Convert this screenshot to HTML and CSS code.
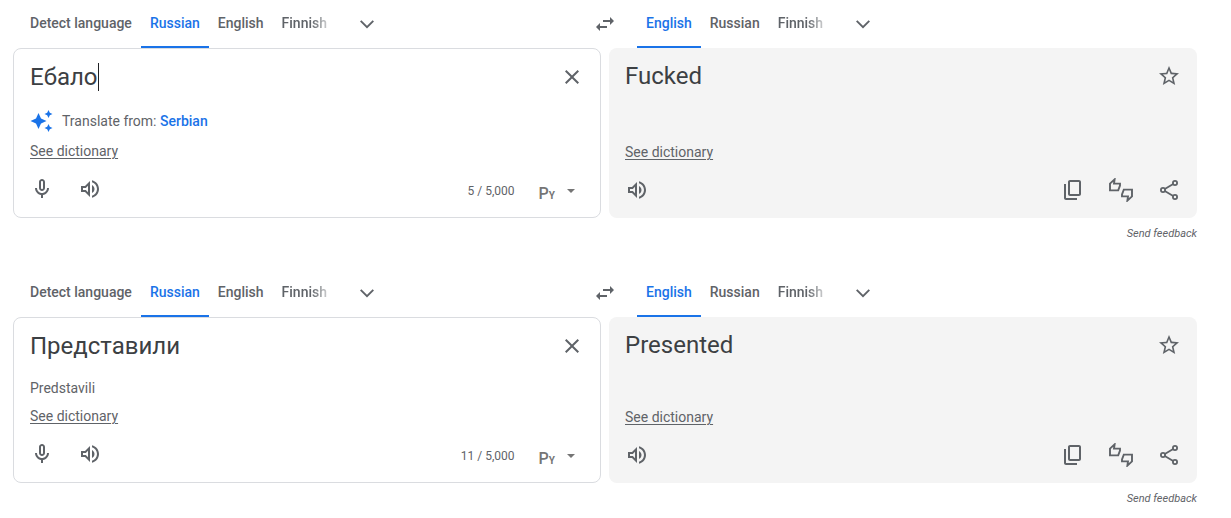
FILE: index.html
```html
<!DOCTYPE html>
<html lang="en">
<head>
<meta charset="utf-8">
<meta name="viewport" content="width=device-width, initial-scale=1">
<title>Translate</title>
<link rel="stylesheet" href="styles.css">
</head>
<body>
<svg class="sprite" aria-hidden="true">
  <symbol id="chevron" viewBox="0 0 24 24"><path d="M5.7 8.8 12 15.1l6.3-6.3" fill="none" stroke="currentColor" stroke-width="1.9"/></symbol>
  <symbol id="swap" viewBox="0 0 24 24"><path d="M6.99 11 3 15l3.99 4v-3H14v-2H6.99v-3zM21 9l-3.99-4v3H10v2h7.01v3L21 9z"/></symbol>
  <symbol id="close" viewBox="0 0 24 24"><path d="M19 6.41 17.59 5 12 10.59 6.41 5 5 6.41 10.59 12 5 17.59 6.41 19 12 13.41 17.59 19 19 17.59 13.41 12z"/></symbol>
  <symbol id="sparkle" viewBox="0 0 24 24"><path d="M8.5 4 11 9.5 16.5 12 11 14.5 8.5 20 6 14.5 .5 12 6 9.5zM18.5 1l1.3 2.7L22.5 5l-2.7 1.3L18.5 9l-1.3-2.7L14.5 5l2.7-1.3zM18.5 15l1.3 2.7 2.7 1.3-2.7 1.3-1.3 2.7-1.3-2.7-2.7-1.3 2.7-1.3z"/></symbol>
  <symbol id="mic" viewBox="0 0 24 24"><path d="M12 14c1.66 0 3-1.34 3-3V5c0-1.66-1.34-3-3-3S9 3.34 9 5v6c0 1.66 1.34 3 3 3zm-1-9c0-.55.45-1 1-1s1 .45 1 1v6c0 .55-.45 1-1 1s-1-.45-1-1V5zm6 6c0 2.76-2.24 5-5 5s-5-2.24-5-5H5c0 3.53 2.61 6.43 6 6.92V21h2v-3.08c3.39-.49 6-3.39 6-6.92h-2z"/></symbol>
  <symbol id="speaker" viewBox="0 0 24 24"><path d="M3 9v6h4l5 5V4L7 9H3zm7-.17v6.34L7.83 13H5v-2h2.83L10 8.83zM16.5 12c0-1.77-1.02-3.29-2.5-4.03v8.05c1.48-.73 2.5-2.25 2.5-4.02zM14 3.23v2.06c2.89.86 5 3.54 5 6.71s-2.11 5.85-5 6.71v2.06c4.01-.91 7-4.49 7-8.77s-2.99-7.86-7-8.77z"/></symbol>
  <symbol id="star" viewBox="0 0 24 24"><path d="M22 9.24l-7.19-.62L12 2 9.19 8.63 2 9.24l5.46 4.73L5.82 21 12 17.27 18.18 21l-1.63-7.03L22 9.24zM12 15.4l-3.76 2.27 1-4.28-3.32-2.88 4.38-.38L12 6.1l1.71 4.04 4.38.38-3.32 2.88 1 4.28L12 15.4z"/></symbol>
  <symbol id="copy" viewBox="0 0 24 24"><path d="M18 2H9c-1.1 0-2 .9-2 2v12c0 1.1.9 2 2 2h9c1.1 0 2-.9 2-2V4c0-1.1-.9-2-2-2zm0 14H9V4h9v12zM3 6v14c0 1.1.9 2 2 2h11v-2H5V6H3z"/></symbol>
  <symbol id="thumbs" viewBox="0 0 24 24"><g fill="none" stroke="currentColor" stroke-width="1.9"><path d="M1 5.6 5.6 1.4 5 5.6H11v2L9.2 12.4H1z"/><path d="M23 18.4l-4.6 4.2.6-4.2H13v-2l1.8-4.8H23z"/></g></symbol>
  <symbol id="share" viewBox="0 0 24 24"><g fill="none" stroke="currentColor" stroke-width="1.8"><circle cx="6" cy="12" r="2.1"/><circle cx="18" cy="5" r="2.1"/><circle cx="18" cy="19" r="2.1"/><path d="M7.8 11 16.2 6M7.8 13l8.4 5"/></g></symbol>
  <symbol id="arrow" viewBox="0 0 8 4"><path d="M0 0h8L4 4z"/></symbol>
</svg>

<main class="page">
  <section class="translator" aria-label="First translation">
    <div class="languages">
      <div class="picker">
        <div class="tabs">
          <button class="tab">Detect language</button>
          <button class="tab active">Russian</button>
          <button class="tab">English</button>
          <button class="tab last">Finnish</button>
        </div>
        <button class="icon-button" aria-label="More source languages"><svg class="icon"><use href="#chevron"/></svg></button>
      </div>
      <button class="icon-button swap" aria-label="Swap languages"><svg class="icon"><use href="#swap"/></svg></button>
      <div class="picker">
        <div class="tabs">
          <button class="tab active">English</button>
          <button class="tab">Russian</button>
          <button class="tab last">Finnish</button>
        </div>
        <button class="icon-button" aria-label="More target languages"><svg class="icon"><use href="#chevron"/></svg></button>
      </div>
    </div>
    <div class="cards">
      <div class="card source">
        <div class="top">
          <div class="entry">
            <textarea class="text" rows="1" aria-label="Source text" spellcheck="false">Ебало</textarea>
            <span class="caret"></span>
          </div>
          <button class="icon-button clear" aria-label="Clear source text"><svg class="icon"><use href="#close"/></svg></button>
        </div>
        <p class="hint"><svg class="icon sparkle"><use href="#sparkle"/></svg><span>Translate from: <a class="suggestion" href="#">Serbian</a></span></p>
        <a class="dictionary" href="#">See dictionary</a>
        <div class="toolbar">
          <button class="icon-button" aria-label="Translate by voice"><svg class="icon"><use href="#mic"/></svg></button>
          <button class="icon-button" aria-label="Listen to source text"><svg class="icon"><use href="#speaker"/></svg></button>
          <span class="counter">5 / 5,000</span>
          <button class="keyboard" aria-label="Input tool"><span class="script">P<small>Y</small></span><svg class="arrow"><use href="#arrow"/></svg></button>
        </div>
      </div>
      <div class="card target">
        <div class="top">
          <p class="text">Fucked</p>
          <button class="icon-button clear" aria-label="Save translation"><svg class="icon"><use href="#star"/></svg></button>
        </div>
        <a class="dictionary" href="#">See dictionary</a>
        <div class="toolbar">
          <button class="icon-button" aria-label="Listen to translation"><svg class="icon"><use href="#speaker"/></svg></button>
          <button class="icon-button push" aria-label="Copy translation"><svg class="icon"><use href="#copy"/></svg></button>
          <button class="icon-button" aria-label="Rate translation"><svg class="icon"><use href="#thumbs"/></svg></button>
          <button class="icon-button" aria-label="Share translation"><svg class="icon"><use href="#share"/></svg></button>
        </div>
      </div>
    </div>
    <div class="feedback"><a href="#">Send feedback</a></div>
  </section>

  <section class="translator" aria-label="Second translation">
    <div class="languages">
      <div class="picker">
        <div class="tabs">
          <button class="tab">Detect language</button>
          <button class="tab active">Russian</button>
          <button class="tab">English</button>
          <button class="tab last">Finnish</button>
        </div>
        <button class="icon-button" aria-label="More source languages"><svg class="icon"><use href="#chevron"/></svg></button>
      </div>
      <button class="icon-button swap" aria-label="Swap languages"><svg class="icon"><use href="#swap"/></svg></button>
      <div class="picker">
        <div class="tabs">
          <button class="tab active">English</button>
          <button class="tab">Russian</button>
          <button class="tab last">Finnish</button>
        </div>
        <button class="icon-button" aria-label="More target languages"><svg class="icon"><use href="#chevron"/></svg></button>
      </div>
    </div>
    <div class="cards">
      <div class="card source">
        <div class="top">
          <div class="entry">
            <textarea class="text" rows="1" aria-label="Source text" spellcheck="false">Представили</textarea>
          </div>
          <button class="icon-button clear" aria-label="Clear source text"><svg class="icon"><use href="#close"/></svg></button>
        </div>
        <p class="hint">Predstavili</p>
        <a class="dictionary" href="#">See dictionary</a>
        <div class="toolbar">
          <button class="icon-button" aria-label="Translate by voice"><svg class="icon"><use href="#mic"/></svg></button>
          <button class="icon-button" aria-label="Listen to source text"><svg class="icon"><use href="#speaker"/></svg></button>
          <span class="counter">11 / 5,000</span>
          <button class="keyboard" aria-label="Input tool"><span class="script">P<small>Y</small></span><svg class="arrow"><use href="#arrow"/></svg></button>
        </div>
      </div>
      <div class="card target">
        <div class="top">
          <p class="text">Presented</p>
          <button class="icon-button clear" aria-label="Save translation"><svg class="icon"><use href="#star"/></svg></button>
        </div>
        <a class="dictionary" href="#">See dictionary</a>
        <div class="toolbar">
          <button class="icon-button" aria-label="Listen to translation"><svg class="icon"><use href="#speaker"/></svg></button>
          <button class="icon-button push" aria-label="Copy translation"><svg class="icon"><use href="#copy"/></svg></button>
          <button class="icon-button" aria-label="Rate translation"><svg class="icon"><use href="#thumbs"/></svg></button>
          <button class="icon-button" aria-label="Share translation"><svg class="icon"><use href="#share"/></svg></button>
        </div>
      </div>
    </div>
    <div class="feedback"><a href="#">Send feedback</a></div>
  </section>
</main>
</body>
</html>
```

FILE: styles.css
```css
* {
  box-sizing: border-box;
}

body {
  margin: 0;
  background: #fff;
  color: #5f6368;
  font-family: Roboto, "Liberation Sans", sans-serif;
  font-size: 14px;
  line-height: 20px;
}

p {
  margin: 0;
}

a {
  color: inherit;
}

button {
  padding: 0;
  border: 0;
  background: none;
  color: inherit;
  font: inherit;
  cursor: pointer;
}

.sprite {
  display: none;
}

.page {
  display: grid;
  gap: 25px;
  padding: 0 34px 0 13px;
}

.icon {
  width: 24px;
  height: 24px;
  flex: none;
  fill: currentColor;
}

.icon-button {
  display: flex;
  flex: none;
  align-items: center;
  justify-content: center;
  width: 48px;
  height: 48px;
}

/* Language pickers */

.languages {
  display: grid;
  grid-template-columns: 1fr 64px 1fr;
}

.picker {
  display: flex;
  min-width: 0;
}

.picker:first-child {
  padding-left: 8px;
}

.tabs {
  display: flex;
  min-width: 0;
  overflow: hidden;
}

.tab {
  height: 48px;
  padding: 0 9px;
  border-bottom: 2px solid transparent;
  font-weight: 500;
  white-space: nowrap;
}

.tab.active {
  border-bottom-color: #1a73e8;
  color: #1a73e8;
}

.tab.last {
  padding-right: 16px;
  mask-image: linear-gradient(to left, transparent 8px, #000 32px);
}

.swap {
  justify-self: center;
}

/* Text cards */

.cards {
  display: grid;
  grid-template-columns: 1fr 1fr;
  gap: 8px;
}

.card {
  display: flex;
  flex-direction: column;
  min-width: 0;
  padding: 4px;
  border-radius: 8px;
}

.source {
  border: 1px solid #dadce0;
}

.target {
  background: #f4f4f4;
}

.top {
  display: flex;
  align-items: center;
  padding-left: 12px;
}

.entry {
  display: flex;
  align-items: center;
  min-width: 0;
}

.text {
  color: #3c4043;
  font-size: 24px;
  line-height: 32px;
}

textarea.text {
  field-sizing: content;
  min-width: 0;
  padding: 0;
  border: 0;
  outline: 0;
  background: none;
  font-family: inherit;
  resize: none;
  overflow: hidden;
}

.caret {
  width: 1px;
  height: 28px;
  background: #202124;
}

.clear {
  margin-left: auto;
}

.hint {
  display: flex;
  align-items: center;
  gap: 8px;
  margin: 8px 12px;
}

.sparkle,
.suggestion {
  color: #1a73e8;
}

.suggestion {
  font-weight: 500;
  text-decoration: none;
}

.dictionary {
  align-self: flex-start;
  margin: auto 12px 4px;
  text-underline-offset: 2px;
}

.toolbar {
  display: flex;
  align-items: center;
}

.counter {
  margin-left: auto;
  padding-top: 4px;
  font-size: 12px;
}

.push {
  margin-left: auto;
}

.keyboard {
  display: flex;
  align-items: center;
  gap: 12px;
  padding: 4px 21px 0 24px;
  color: #757575;
}

.script {
  padding-top: 8px;
  font-size: 16px;
  font-weight: 500;
}

.script small {
  font-size: 10px;
  font-weight: 700;
}

.arrow {
  width: 8px;
  height: 4px;
  fill: currentColor;
}

.feedback {
  padding-top: 6px;
  font-size: 11px;
  font-style: italic;
  text-align: right;
}

.feedback a {
  text-decoration: none;
}
```
